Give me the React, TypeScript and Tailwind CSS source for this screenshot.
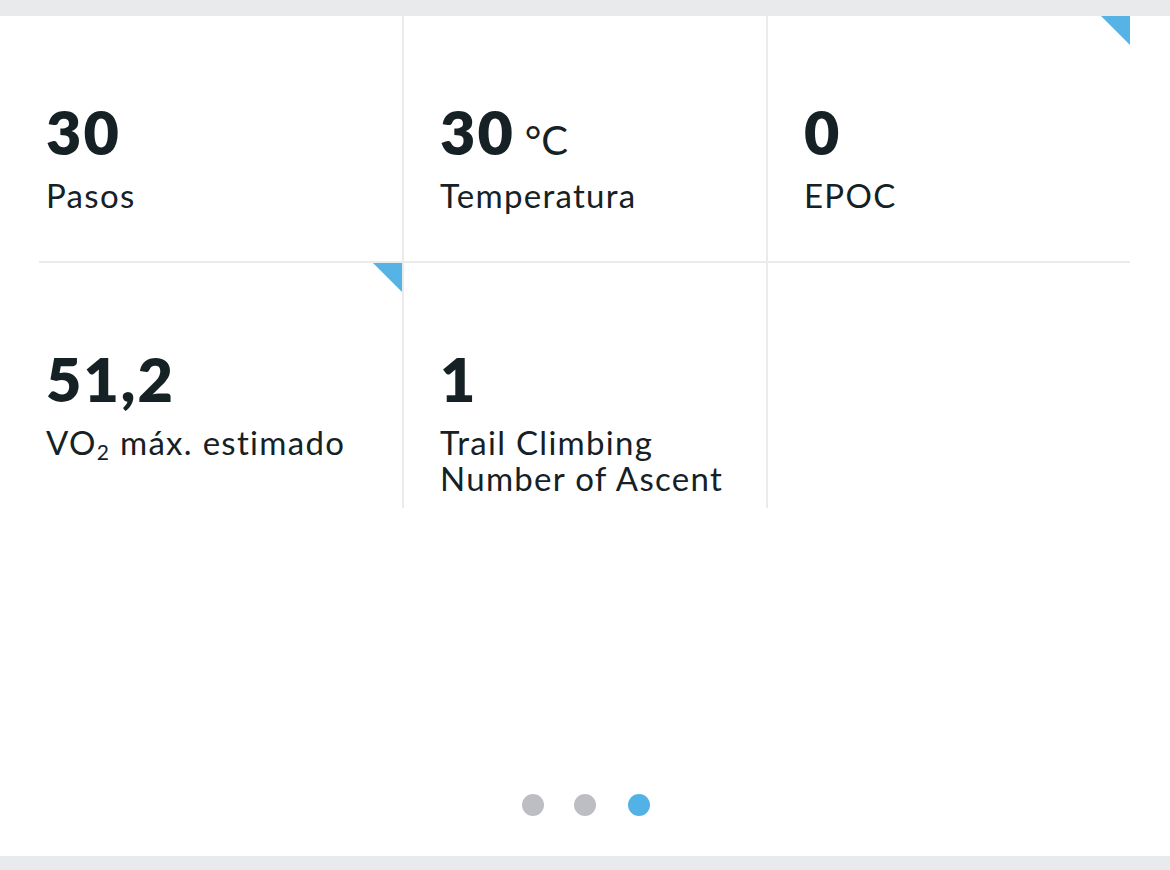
type Stat = {
  value?: string;
  unit?: string;
  label?: React.ReactNode;
  flag?: boolean; // blue corner marker
  first?: boolean;
};

const stats: Stat[] = [
  { value: "30", label: "Pasos", first: true },
  { value: "30", unit: "°C", label: "Temperatura" },
  { value: "0", label: "EPOC", flag: true },
  {
    value: "51,2",
    label: (
      <>
        VO<sub className="text-[21px] relative top-[5px] align-baseline">2</sub> máx. estimado
      </>
    ),
    flag: true,
    first: true,
  },
  {
    value: "1",
    label: (
      <>
        Trail Climbing
        <br />
        Number of Ascent
      </>
    ),
  },
  {},
];

function StatCell({ value, unit, label, flag, first }: Stat) {
  return (
    <div
      className={`relative bg-white h-[245px] pt-[86px] ${
        first ? "pl-[7px]" : "pl-[36px]"
      }`}
    >
      {flag && (
        <div className="absolute top-0 right-0 w-[29px] h-[29px] bg-[#55b3e6] [clip-path:polygon(0_0,100%_0,100%_100%)]" />
      )}
      {value && (
        <div className="flex items-baseline">
          <span className="text-[61px] leading-[60px] font-extrabold tracking-[2px]">{value}</span>
          {unit && <span className="ml-[10px] text-[40px] leading-none">{unit}</span>}
        </div>
      )}
      {label && <div className="mt-[15px] text-[33px] leading-[36px] tracking-[1.3px]">{label}</div>}
    </div>
  );
}

export default function App() {
  return (
    <div className="w-[1170px] h-[870px] flex flex-col bg-white text-[#152124] font-['Lato',sans-serif]">
      <div className="h-[16px] bg-[#e9eaec]" />
      <div className="flex-1 flex flex-col">
        <div className="ml-[39px] w-[1091px] grid grid-cols-[363px_362px_362px] gap-[2px] bg-[#ebebeb]">
          {stats.map((s, i) => (
            <StatCell key={i} {...s} />
          ))}
        </div>
        <div className="mt-auto mb-[40px] pl-[2px] flex justify-center items-center">
          <span className="w-[22px] h-[22px] rounded-full bg-[#bcbec3]" />
          <span className="ml-[30px] w-[22px] h-[22px] rounded-full bg-[#bcbec3]" />
          <span className="ml-[32px] w-[22px] h-[22px] rounded-full bg-[#53b2e5]" />
        </div>
      </div>
      <div className="h-[14px] bg-[#e9eaec]" />
    </div>
  );
}
